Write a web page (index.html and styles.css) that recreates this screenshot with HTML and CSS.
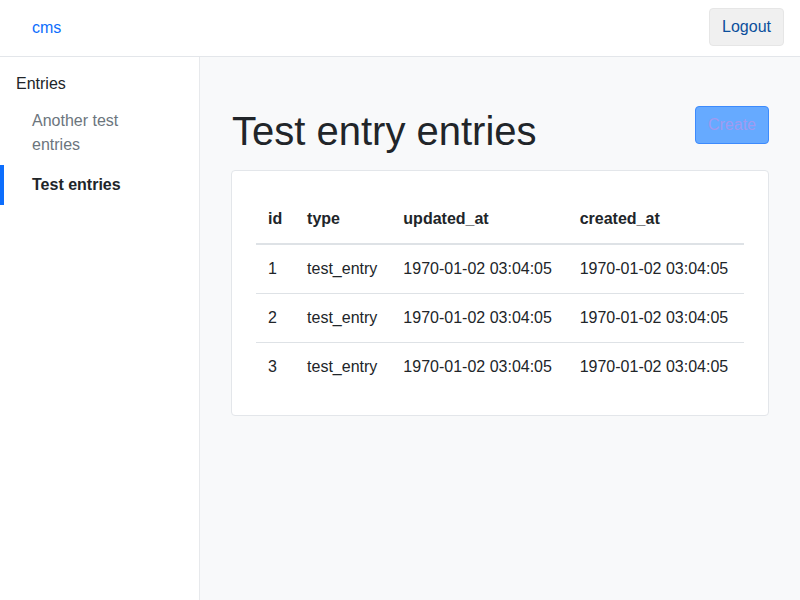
FILE: index.html
```html
<!DOCTYPE html>
<html>
<head>
<meta charset="utf-8">
<link rel="stylesheet" href="styles.css">
</head>
<body>
<header class="topbar">
  <a class="brand" href="#">cms</a>
  <button class="logout">Logout</button>
</header>
<div class="layout">
  <nav class="sidebar">
    <div class="nav-heading">Entries</div>
    <ul class="nav-list">
      <li><a class="nav-link" href="#">Another test entries</a></li>
      <li><a class="nav-link active" href="#">Test entries</a></li>
    </ul>
  </nav>
  <main class="main">
    <div class="title-row">
      <h1 class="title">Test entry entries</h1>
      <button class="create" disabled>Create</button>
    </div>
    <div class="card">
      <table class="table">
        <thead>
          <tr><th>id</th><th>type</th><th>updated_at</th><th>created_at</th></tr>
        </thead>
        <tbody>
          <tr><td>1</td><td>test_entry</td><td>1970-01-02 03:04:05</td><td>1970-01-02 03:04:05</td></tr>
          <tr><td>2</td><td>test_entry</td><td>1970-01-02 03:04:05</td><td>1970-01-02 03:04:05</td></tr>
          <tr><td>3</td><td>test_entry</td><td>1970-01-02 03:04:05</td><td>1970-01-02 03:04:05</td></tr>
        </tbody>
      </table>
    </div>
  </main>
</div>
</body>
</html>
```
FILE: styles.css
```css
* { box-sizing: border-box; }
html, body { margin: 0; height: 100%; }
body {
  font-family: "Liberation Sans", Arial, sans-serif;
  font-size: 16px;
  line-height: 24px;
  color: #212529;
  background: #fff;
  display: flex;
  flex-direction: column;
}
.topbar {
  height: 57px;
  border-bottom: 1px solid #e3e6ea;
  display: flex;
  align-items: flex-start;
  justify-content: space-between;
  padding: 0 16px 0 32px;
  flex: none;
}
.brand {
  color: #0d6efd;
  text-decoration: none;
  margin-top: 16px;
}
.logout {
  font: inherit;
  line-height: 24px;
  color: #0b4f9c;
  background: #f0f0f0;
  border: 1px solid #e6e6e6;
  border-radius: 4px;
  padding: 6px 12px;
  margin-top: 8px;
}
.layout {
  flex: 1;
  display: flex;
}
.sidebar {
  width: 200px;
  flex: none;
  border-right: 1px solid #e7e9ec;
  padding-top: 15px;
}
.nav-heading {
  padding: 0 16px;
  margin-bottom: 5px;
}
.nav-list {
  list-style: none;
  margin: 0;
  padding: 0;
}
.nav-link {
  display: block;
  padding: 8px 40px 8px 28px;
  color: #6c757d;
  text-decoration: none;
  border-left: 4px solid transparent;
}
.nav-link.active {
  color: #212529;
  font-weight: bold;
  border-left-color: #0d6efd;
}
.main {
  flex: 1;
  background: #f8f9fa;
  padding: 49px 31px 32px 31px;
}
.title-row {
  display: flex;
  justify-content: space-between;
  align-items: flex-start;
  margin-bottom: 15px;
}
.title {
  font-size: 40px;
  line-height: 48px;
  font-weight: 500;
  margin: 1px 0 0 1px;
}
.create {
  font: inherit;
  line-height: 24px;
  color: #a09af0;
  background: #66aaff;
  border: 1px solid #3d8bfd;
  border-radius: 4px;
  padding: 6px 12px;
}
.card {
  background: #fff;
  border: 1px solid #e3e6ea;
  border-radius: 4px;
  padding: 24px;
}
.table {
  width: 100%;
  border-collapse: collapse;
}
.table th, .table td {
  text-align: left;
  padding: 12px;
  white-space: nowrap;
}
.table thead th {
  border-bottom: 2px solid #dee2e6;
}
.table tbody tr + tr td {
  border-top: 1px solid #dee2e6;
}
```
